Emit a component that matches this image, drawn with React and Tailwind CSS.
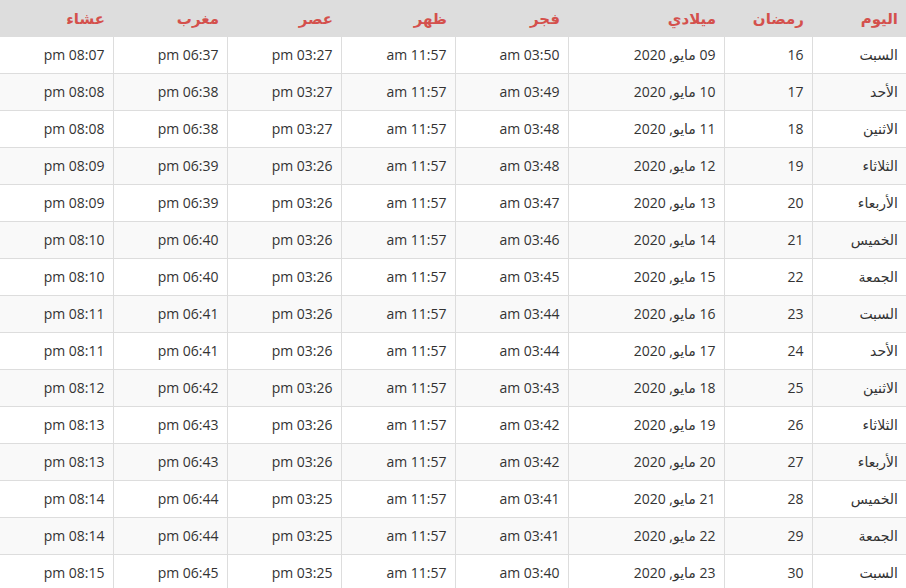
import React from "react";

const rows = [
  ["السبت", 16, "09", "03:50", "03:27", "06:37", "08:07"],
  ["الأحد", 17, "10", "03:49", "03:27", "06:38", "08:08"],
  ["الاثنين", 18, "11", "03:48", "03:27", "06:38", "08:08"],
  ["الثلاثاء", 19, "12", "03:48", "03:26", "06:39", "08:09"],
  ["الأربعاء", 20, "13", "03:47", "03:26", "06:39", "08:09"],
  ["الخميس", 21, "14", "03:46", "03:26", "06:40", "08:10"],
  ["الجمعة", 22, "15", "03:45", "03:26", "06:40", "08:10"],
  ["السبت", 23, "16", "03:44", "03:26", "06:41", "08:11"],
  ["الأحد", 24, "17", "03:44", "03:26", "06:41", "08:11"],
  ["الاثنين", 25, "18", "03:43", "03:26", "06:42", "08:12"],
  ["الثلاثاء", 26, "19", "03:42", "03:26", "06:43", "08:13"],
  ["الأربعاء", 27, "20", "03:42", "03:26", "06:43", "08:13"],
  ["الخميس", 28, "21", "03:41", "03:25", "06:44", "08:14"],
  ["الجمعة", 29, "22", "03:41", "03:25", "06:44", "08:14"],
  ["السبت", 30, "23", "03:40", "03:25", "06:45", "08:15"],
];

const headers = ["اليوم", "رمضان", "ميلادي", "فجر", "ظهر", "عصر", "مغرب", "عشاء"];

export default function App() {
  return (
    <div
      dir="rtl"
      className="w-[906px] h-[588px] overflow-hidden bg-white text-[#333] font-['Open_Sans','DejaVu_Sans',sans-serif]"
    >
      <table className="w-[906px] table-fixed border-collapse text-sm">
        <colgroup>
          <col className="w-[94px]" />
          <col className="w-[88px]" />
          <col className="w-[156px]" />
          <col className="w-[113px]" />
          <col className="w-[114px]" />
          <col className="w-[114px]" />
          <col className="w-[114px]" />
          <col className="w-[113px]" />
        </colgroup>
        <thead>
          <tr className="bg-[#dddddd]">
            {headers.map((h) => (
              <th
                key={h}
                className="px-2 py-2 text-right font-bold text-[15px] leading-5 text-[#d4504c]"
              >
                {h}
              </th>
            ))}
          </tr>
        </thead>
        <tbody>
          {rows.map((r, i) => (
            <tr key={i} className={i % 2 === 1 ? "bg-[#f9f9f9]" : "bg-white"}>
              <td className="px-2 py-2 leading-5 text-right border-t border-l border-[#dddddd]">{r[0]}</td>
              <td className="px-2 py-2 leading-5 text-right border-t border-l border-[#dddddd]">{r[1]}</td>
              <td className="px-2 py-2 leading-5 text-right border-t border-l border-[#dddddd]">{r[2]} مايو, 2020</td>
              <td className="px-2 py-2 leading-5 text-right border-t border-l border-[#dddddd]">{r[3]} am</td>
              <td className="px-2 py-2 leading-5 text-right border-t border-l border-[#dddddd]">11:57 am</td>
              <td className="px-2 py-2 leading-5 text-right border-t border-l border-[#dddddd]">{r[4]} pm</td>
              <td className="px-2 py-2 leading-5 text-right border-t border-l border-[#dddddd]">{r[5]} pm</td>
              <td className="px-2 py-2 leading-5 text-right border-t border-[#dddddd]">{r[6]} pm</td>
            </tr>
          ))}
        </tbody>
      </table>
    </div>
  );
}
